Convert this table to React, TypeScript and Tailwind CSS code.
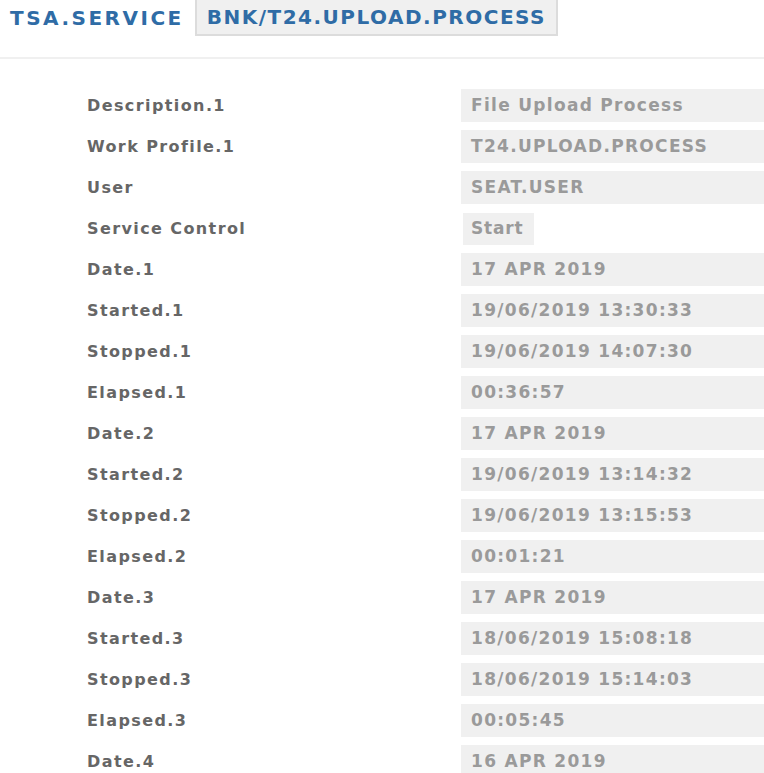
import React from "react";

const rows: [string, string][] = [
  ["Description.1", "File Upload Process"],
  ["Work Profile.1", "T24.UPLOAD.PROCESS"],
  ["User", "SEAT.USER"],
  ["Service Control", "__START__"],
  ["Date.1", "17 APR 2019"],
  ["Started.1", "19/06/2019 13:30:33"],
  ["Stopped.1", "19/06/2019 14:07:30"],
  ["Elapsed.1", "00:36:57"],
  ["Date.2", "17 APR 2019"],
  ["Started.2", "19/06/2019 13:14:32"],
  ["Stopped.2", "19/06/2019 13:15:53"],
  ["Elapsed.2", "00:01:21"],
  ["Date.3", "17 APR 2019"],
  ["Started.3", "18/06/2019 15:08:18"],
  ["Stopped.3", "18/06/2019 15:14:03"],
  ["Elapsed.3", "00:05:45"],
  ["Date.4", "16 APR 2019"],
];

export default function App() {
  return (
    <div
      className="w-[764px] h-[773px] overflow-hidden bg-white"
      style={{ fontFamily: '"DejaVu Sans", sans-serif' }}
    >
      <div className="flex items-center h-[36px] pl-[10px]">
        <span className="text-[20px] font-bold tracking-[2.5px] text-[#2f6ca6] leading-none">
          TSA.SERVICE
        </span>
        <span className="ml-[11px] h-[36px] flex items-center px-[10px] bg-[#f0f0f0] border-2 border-t-0 border-[#dcdcdc] text-[20px] font-bold tracking-[1.5px] text-[#2f6ca6] leading-none">
          BNK/T24.UPLOAD.PROCESS
        </span>
      </div>
      <div className="mt-[21px] h-[2px] bg-[#f0f0f0]" />
      <div className="mt-[30px] pl-[87px] flex flex-col gap-[8px]">
        {rows.map(([label, value]) => (
          <div key={label} className="grid grid-cols-[374px_1fr] items-center h-[33px]">
            <span className="text-[16px] font-bold tracking-[1.4px] text-[#666666] leading-none">
              {label}
            </span>
            {value === "__START__" ? (
              <div className="flex">
                <span className="ml-[2px] h-[32px] w-[71px] flex items-center pl-[8px] bg-[#f0f0f0] text-[17px] font-bold tracking-[0.8px] text-[#9a9a9a] leading-none">
                  Start
                </span>
              </div>
            ) : (
              <div className="h-[33px] flex items-center pl-[10px] bg-[#f0f0f0] text-[17px] font-bold tracking-[1.3px] text-[#9a9a9a] leading-none whitespace-nowrap">
                {value}
              </div>
            )}
          </div>
        ))}
      </div>
    </div>
  );
}
